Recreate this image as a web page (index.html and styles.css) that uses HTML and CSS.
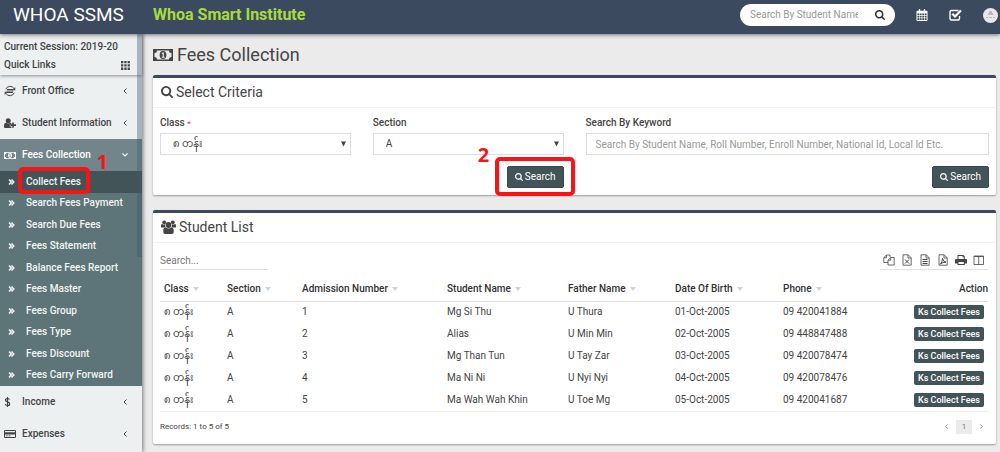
FILE: index.html
```html
<!DOCTYPE html>
<html lang="en">
<head>
<meta charset="utf-8">
<meta name="viewport" content="width=device-width, initial-scale=1">
<title>Fees Collection - Whoa SSMS</title>
<link rel="stylesheet" href="styles.css">
</head>
<body>
<svg class="sprite" aria-hidden="true">
  <symbol id="i-search" viewBox="64 128 1664 1664"><path d="M1216 832q0-185-131.5-316.5t-316.5-131.5-316.5 131.5-131.5 316.5 131.5 316.5 316.5 131.5 316.5-131.5 131.5-316.5zm512 832q0 52-38 90t-90 38q-54 0-90-38l-343-342q-179 124-399 124-143 0-273.5-55.5t-225-150-150-225-55.5-273.5 55.5-273.5 150-225 225-150 273.5-55.5 273.5 55.5 225 150 150 225 55.5 273.5q0 220-124 399l343 343q37 37 37 90z"/></symbol>
  <symbol id="i-money" viewBox="0 0 20 14"><path fill-rule="evenodd" d="M0 1h20v12H0zM4 2.500A2.500 2.500 0 0 1 1.500 5v4A2.500 2.500 0 0 1 4 11.500h12A2.500 2.500 0 0 1 18.500 9V5A2.500 2.500 0 0 1 16 2.500z"/><path fill-rule="evenodd" d="M10 2.900a3.400 4.100 0 0 1 0 8.200a3.400 4.100 0 0 1 0-8.200zM10 4.300L8.500 5.500l.5.700.6-.4v2.900h-.9v1h3v-1h-.9V4.300z"/></symbol>
  <symbol id="i-left" viewBox="0 0 6 8"><path fill="none" stroke="currentColor" d="M4.500 1.500L2 4l2.500 2.500"/></symbol>
  <symbol id="i-right" viewBox="0 0 6 8"><path fill="none" stroke="currentColor" d="M1.500 1.500L4 4 1.500 6.500"/></symbol>
  <symbol id="i-down" viewBox="0 0 8 6"><path fill="none" stroke="currentColor" stroke-width="1.200" d="M1.500 1.500L4 4l2.500-2.500"/></symbol>
  <symbol id="i-dbl" viewBox="0 0 8 8"><path fill="none" stroke="currentColor" stroke-width="1.500" d="M1 1.500L3.300 4 1 6.500M3.500 1.500L5.800 4 3.500 6.500"/></symbol>
  <symbol id="i-caret" viewBox="0 0 6 6"><path d="M0 0h6L3 6z"/></symbol>
  <symbol id="i-sort" viewBox="0 0 6 4"><path d="M0 0h6L3 4z"/></symbol>
  <symbol id="i-grid" viewBox="0 0 9 9"><path d="M0 0h2.300v2.300H0zM3.300 0h2.300v2.300H3.300zM6.600 0h2.300v2.300H6.600zM0 3.300h2.300v2.300H0zM3.300 3.300h2.300v2.300H3.300zM6.600 3.300h2.300v2.300H6.600zM0 6.600h2.300v2.300H0zM3.300 6.600h2.300v2.300H3.300zM6.600 6.600h2.300v2.300H6.600z"/></symbol>
  <symbol id="i-office" viewBox="0 0 12 12"><g fill="none" stroke="currentColor"><path d="M1.800 4.200a4.600 4.600 0 0 1 8.200-.7M10.200 7.800a4.600 4.600 0 0 1-8.200.7"/><path d="M3 4.500h6M2.700 6h6.600M3 7.500h6"/></g><path d="M11.300 2v3.200H8.500zM.7 10V6.800h2.800z"/></symbol>
  <symbol id="i-userplus" viewBox="0 0 12 10"><circle cx="4.200" cy="2.700" r="2.500"/><path d="M0 9V7.500Q0 5 2 4.800q2.200 1.600 4.400 0 .6 0 1 .5v1.200H5.800v2h1.600V10H1Q0 10 0 9zM8.200 4.500h1.600v1.800H12v1.600H9.800v1.800H8.200V7.900H6.400V6.300h1.800z"/></symbol>
  <symbol id="i-dollar" viewBox="0 0 8 12"><path fill="none" stroke="currentColor" stroke-width="1.200" d="M5.500 3.700Q5.200 2.500 3.500 2.500 1.500 2.500 1.500 4 1.500 5.300 3.500 5.900q2.200.600 2.200 2Q5.700 9.500 3.500 9.500 1.500 9.500 1.200 8.200M3.500 1v10"/></symbol>
  <symbol id="i-card" viewBox="0 0 12 10"><path fill-rule="evenodd" d="M1 1h10q1 0 1 1v6q0 1-1 1H1Q0 9 0 8V2q0-1 1-1zm0 1v1.200h10V2zm0 3.500V8h10V5.500zM1.800 6.500h2v.8h-2zM4.600 6.500h2v.8h-2z"/></symbol>
  <symbol id="i-calendar" viewBox="0 0 12 13"><path fill-rule="evenodd" d="M1 2h1.500V.8Q2.500 0 3.300 0t.8.800V2h3.800V.8q0-.8.8-.8t.8.800V2H11q1 0 1 1v9q0 1-1 1H1q-1 0-1-1V3q0-1 1-1zm0 3v1.800h2V5zm2.600 0v1.800h2V5zm2.700 0v1.800h2V5zM9 5v1.800h2V5zM1 7.500v1.800h2V7.500zm2.600 0v1.800h2V7.500zm2.700 0v1.800h2V7.500zM9 7.500v1.800h2V7.500zM1 10v1.800h2V10zm2.600 0v1.800h2V10zm2.700 0v1.800h2V10zM9 10v1.800h2V10z"/></symbol>
  <symbol id="i-check" viewBox="0 0 13 12"><path fill="none" stroke="currentColor" stroke-width="1.400" d="M9.500 1.500H2.500Q1 1.500 1 3v6.500Q1 11 2.500 11H9q1.500 0 1.500-1.500V7"/><path fill="none" stroke="currentColor" stroke-width="2.200" d="M3.300 4.800L6 7.500l6-6"/></symbol>
  <symbol id="i-users" viewBox="0 0 15 14"><circle cx="3.200" cy="2.300" r="1.900"/><circle cx="11.800" cy="2.300" r="1.900"/><path d="M0 7V5.500Q0 3.800 1 3.900q2 1.200 3 .4-.3 2 .7 3.300H1Q0 7.600 0 7zM15 7V5.500q0-1.700-1-1.600-2 1.200-3 .4.300 2-.7 3.300H14q1 0 1-.6z"/><circle cx="7.500" cy="5" r="2.900"/><path d="M2.300 12V10.500Q2.300 7.500 4.600 7.400q2.900 2.200 5.800 0 2.300.1 2.300 3.100V12q0 2-1.700 2H4q-1.700 0-1.700-2z"/></symbol>
  <symbol id="i-copy" viewBox="0 0 12 12"><path fill="none" stroke="currentColor" stroke-width=".8" d="M7 3V1H3.500L.8 3.700V8.500H5M3.500 1v2.700H.8M11.200 3.500H7.700L5 6.200V11h6.200zM7.700 3.500v2.700H5"/></symbol>
  <symbol id="i-file" viewBox="0 0 10 12"><path fill="none" stroke="currentColor" stroke-width=".8" d="M1 .8h5.200l3 3v7.400H1zM6 .8V4h3.200"/></symbol>
  <symbol id="i-print" viewBox="0 0 12 12"><path fill-rule="evenodd" d="M2.500 1h5.800L9.800 2.500V5H11q1 0 1 1v3.500H9.800V11H2.500V9.500H0V6q0-1 1-1h1.500zm1 1v3h5.300V3.200H7.600V2zm0 6v2h5.300V8z"/></symbol>
  <symbol id="i-columns" viewBox="0 0 12 12"><path fill="none" stroke="currentColor" stroke-width=".8" d="M1 2h9.500v8.500H1zM5.700 2v8.500M1 2.500h9.500"/></symbol>
</svg>

<header class="topbar">
  <a class="brand" href="#">WHOA SSMS</a>
  <span class="institute">Whoa Smart Institute</span>
  <form class="quick-search">
    <input type="text" aria-label="Search students" placeholder="Search By Student Name">
    <button type="button" aria-label="Search"><svg width="10" height="10"><use href="#i-search"/></svg></button>
  </form>
  <nav class="tools">
    <a href="#" aria-label="Calendar"><svg width="12" height="12"><use href="#i-calendar"/></svg></a>
    <a href="#" aria-label="Tasks"><svg width="13" height="12"><use href="#i-check"/></svg></a>
    <a href="#" aria-label="Profile"><svg width="15" height="15" viewBox="0 0 15 15"><circle cx="7.500" cy="7.500" r="7.500" fill="#e9e9e9"/><path fill="#bbb" d="M4.500 7q0-2 1.500-2V3.500L7.500 2.500 9 3.500V5q1.500 0 1.500 2zM3 9h2v1H3zm3 0h3v1H6zm4 0h2v1h-2z"/></svg></a>
  </nav>
</header>

<div class="layout">
  <aside class="sidebar">
    <div class="session">
      <div>Current Session: 2019-20</div>
      <a href="#">Quick Links <svg width="9" height="9"><use href="#i-grid"/></svg></a>
    </div>
    <nav class="menu">
      <a class="item" href="#"><svg width="12" height="12"><use href="#i-office"/></svg><span>Front Office</span><svg class="arrow" width="6" height="8"><use href="#i-left"/></svg></a>
      <a class="item" href="#"><svg width="12" height="10"><use href="#i-userplus"/></svg><span>Student Information</span><svg class="arrow" width="6" height="8"><use href="#i-left"/></svg></a>
      <a class="item open" href="#"><svg width="12" height="9"><use href="#i-money"/></svg><span>Fees Collection</span><svg class="arrow" width="8" height="6"><use href="#i-down"/></svg></a>
      <div class="submenu">
        <a class="current" href="#"><svg width="8" height="8"><use href="#i-dbl"/></svg><span>Collect Fees</span></a>
        <a href="#"><svg width="8" height="8"><use href="#i-dbl"/></svg><span>Search Fees Payment</span></a>
        <a href="#"><svg width="8" height="8"><use href="#i-dbl"/></svg><span>Search Due Fees</span></a>
        <a href="#"><svg width="8" height="8"><use href="#i-dbl"/></svg><span>Fees Statement</span></a>
        <a href="#"><svg width="8" height="8"><use href="#i-dbl"/></svg><span>Balance Fees Report</span></a>
        <a href="#"><svg width="8" height="8"><use href="#i-dbl"/></svg><span>Fees Master</span></a>
        <a href="#"><svg width="8" height="8"><use href="#i-dbl"/></svg><span>Fees Group</span></a>
        <a href="#"><svg width="8" height="8"><use href="#i-dbl"/></svg><span>Fees Type</span></a>
        <a href="#"><svg width="8" height="8"><use href="#i-dbl"/></svg><span>Fees Discount</span></a>
        <a href="#"><svg width="8" height="8"><use href="#i-dbl"/></svg><span>Fees Carry Forward</span></a>
        <div class="mark mark-one"><span>1</span></div>
      </div>
      <a class="item" href="#"><svg width="8" height="12"><use href="#i-dollar"/></svg><span>Income</span><svg class="arrow" width="6" height="8"><use href="#i-left"/></svg></a>
      <a class="item" href="#"><svg width="12" height="10"><use href="#i-card"/></svg><span>Expenses</span><svg class="arrow" width="6" height="8"><use href="#i-left"/></svg></a>
    </nav>
    <div class="scroll-thumb"></div>
  </aside>

  <main class="content">
    <h1><svg width="20" height="14"><use href="#i-money"/></svg>Fees Collection</h1>

    <section class="panel">
      <h2><svg width="12" height="12"><use href="#i-search"/></svg>Select Criteria</h2>
      <form class="criteria">
        <div class="field">
          <label for="class">Class <b class="req">*</b></label>
          <div class="select"><select id="class"><option>၈ တန်း</option></select><svg width="5" height="6"><use href="#i-caret"/></svg></div>
        </div>
        <div class="field">
          <label for="section">Section</label>
          <div class="select"><select id="section"><option>A</option></select><svg width="5" height="6"><use href="#i-caret"/></svg></div>
        </div>
        <div class="field wide">
          <label for="keyword">Search By Keyword</label>
          <input id="keyword" type="text" placeholder="Search By Student Name, Roll Number, Enroll Number, National Id, Local Id Etc.">
        </div>
        <div class="submit wide">
          <div class="marked"><button class="btn" type="button"><svg width="8" height="8"><use href="#i-search"/></svg>Search</button><div class="mark mark-two"><span>2</span></div></div>
        </div>
        <div class="submit wide">
          <button class="btn" type="button"><svg width="8" height="8"><use href="#i-search"/></svg>Search</button>
        </div>
      </form>
    </section>

    <section class="panel">
      <h2><svg width="15" height="14"><use href="#i-users"/></svg>Student List</h2>
      <div class="list">
        <div class="list-bar">
          <input type="text" aria-label="Search list" placeholder="Search...">
          <div class="export">
            <button type="button" aria-label="Copy"><svg width="12" height="12"><use href="#i-copy"/></svg></button>
            <button type="button" aria-label="Excel"><svg width="10" height="12"><use href="#i-file"/><path class="line" d="M3 5.500l4 4M7 5.500l-4 4"/></svg></button>
            <button type="button" aria-label="CSV"><svg width="10" height="12"><use href="#i-file"/><path class="line" d="M2.500 5.500h5M2.500 7.500h5M2.500 9.500h5"/></svg></button>
            <button type="button" aria-label="PDF"><svg width="10" height="12"><use href="#i-file"/><path class="line" d="M2.500 10Q4.500 7.500 4.500 4.500 5 7.500 8 8.200 5 7.800 2.500 10"/></svg></button>
            <button type="button" aria-label="Print"><svg width="12" height="12"><use href="#i-print"/></svg></button>
            <button type="button" aria-label="Columns"><svg width="12" height="12"><use href="#i-columns"/></svg></button>
          </div>
        </div>
        <table>
          <colgroup><col class="c-class"><col class="c-section"><col class="c-admission"><col class="c-name"><col class="c-father"><col class="c-birth"><col class="c-phone"><col></colgroup>
          <thead>
            <tr><th>Class<svg width="6" height="4"><use href="#i-sort"/></svg></th><th>Section<svg width="6" height="4"><use href="#i-sort"/></svg></th><th>Admission Number<svg width="6" height="4"><use href="#i-sort"/></svg></th><th>Student Name<svg width="6" height="4"><use href="#i-sort"/></svg></th><th>Father Name<svg width="6" height="4"><use href="#i-sort"/></svg></th><th>Date Of Birth<svg width="6" height="4"><use href="#i-sort"/></svg></th><th>Phone<svg width="6" height="4"><use href="#i-sort"/></svg></th><th class="action">Action</th></tr>
          </thead>
          <tbody>
            <tr><td>၈ တန်း</td><td>A</td><td>1</td><td>Mg Si Thu</td><td>U Thura</td><td>01-Oct-2005</td><td>09 420041884</td><td class="collect"><a href="#">Ks Collect Fees</a></td></tr>
            <tr><td>၈ တန်း</td><td>A</td><td>2</td><td>Alias</td><td>U Min Min</td><td>02-Oct-2005</td><td>09 448847488</td><td class="collect"><a href="#">Ks Collect Fees</a></td></tr>
            <tr><td>၈ တန်း</td><td>A</td><td>3</td><td>Mg Than Tun</td><td>U Tay Zar</td><td>03-Oct-2005</td><td>09 420078474</td><td class="collect"><a href="#">Ks Collect Fees</a></td></tr>
            <tr><td>၈ တန်း</td><td>A</td><td>4</td><td>Ma Ni Ni</td><td>U Nyi Nyi</td><td>04-Oct-2005</td><td>09 420078476</td><td class="collect"><a href="#">Ks Collect Fees</a></td></tr>
            <tr><td>၈ တန်း</td><td>A</td><td>5</td><td>Ma Wah Wah Khin</td><td>U Toe Mg</td><td>05-Oct-2005</td><td>09 420041687</td><td class="collect"><a href="#">Ks Collect Fees</a></td></tr>
          </tbody>
        </table>
        <div class="list-foot">
          <span>Records: 1 to 5 of 5</span>
          <nav class="pages">
            <a href="#" aria-label="Previous"><svg width="5" height="7"><use href="#i-left"/></svg></a>
            <a class="page" href="#">1</a>
            <a href="#" aria-label="Next"><svg width="5" height="7"><use href="#i-right"/></svg></a>
          </nav>
        </div>
      </div>
    </section>
  </main>
</div>
</body>
</html>
```
FILE: styles.css
```css
* { box-sizing: border-box; }
body {
  margin: 0;
  min-height: 100vh;
  display: flex;
  flex-direction: column;
  background: #ebebeb;
  color: #444;
  font: 10px/16px Roboto, "Noto Sans", "Noto Sans Myanmar", sans-serif;
}
a { color: inherit; text-decoration: none; }
button, input, select { font: inherit; color: inherit; }
button { cursor: pointer; }
svg { display: block; flex: none; fill: currentColor; }
.sprite { position: absolute; width: 0; height: 0; }
::placeholder { color: #999; opacity: 1; }

.topbar {
  position: relative;
  z-index: 3;
  display: flex;
  align-items: center;
  height: 34px;
  padding: 0 2px 4px 13px;
  background: #3c4a5f;
  color: #fff;
  box-shadow: 0 1px 4px rgba(0, 0, 0, .5);
}
.brand { width: 140px; font-size: 19px; line-height: 28px; }
.institute { color: #a7dc3c; font-size: 16px; font-weight: 700; }
.quick-search {
  display: flex;
  align-items: center;
  width: 155px;
  height: 22px;
  margin-left: auto;
  padding: 0 10px;
  border-radius: 11px;
  background: #fff;
  color: #333;
}
.quick-search input {
  flex: 1;
  min-width: 0;
  margin-right: 17px;
  padding: 0;
  border: 0;
  background: none;
  outline: 0;
}
.quick-search button { padding: 0; border: 0; background: none; }
.tools { display: flex; align-items: center; gap: 21px; margin-left: 21px; }

.layout { flex: 1; display: flex; }
.sidebar {
  position: relative;
  z-index: 2;
  flex: none;
  width: 142px;
  background: #ecf0f1;
  font-weight: 500;
  box-shadow: 1px 0 4px rgba(0, 0, 0, .5);
}
.session {
  height: 41px;
  padding: 4px 12px 0 4px;
  line-height: 18px;
  box-shadow: 0 1px 3px rgba(0, 0, 0, .4);
}
.session a { display: flex; align-items: center; justify-content: space-between; }
.item {
  display: grid;
  grid-template-columns: 18px 1fr 8px;
  align-items: center;
  height: 32px;
  padding: 0 13px 0 4px;
}
.item .arrow { justify-self: center; }
.item.open { background: #72858a; color: #fff; }
.submenu {
  position: relative;
  display: grid;
  grid-auto-rows: 1fr;
  height: 215px;
  background: #5d7478;
  color: #f2f5f5;
}
.submenu a {
  display: grid;
  grid-template-columns: 18px 1fr;
  align-items: center;
  padding-left: 8px;
}
.submenu a.current { background: #435458; }
.scroll-thumb {
  position: absolute;
  top: 0;
  right: 0;
  width: 5px;
  height: 223px;
  background: rgba(66, 90, 115, .4);
}

.mark {
  position: absolute;
  z-index: 4;
  border: 4px solid #f81414;
  border-radius: 5px;
  color: #f81414;
  font: 700 20px/20px "Open Sans", sans-serif;
  pointer-events: none;
}
.mark span { position: absolute; }
.mark-one { top: -4px; left: 18px; width: 72px; height: 27px; }
.mark-one span { top: -19px; right: -22px; }
.marked { position: relative; }
.mark-two { inset: -9px -11px -8px -12px; }
.mark-two span { top: -16px; left: -21px; }

.content { flex: 1; min-width: 0; padding: 9px 4px 8px 11px; }
h1, h2 { display: flex; align-items: center; margin: 0; font-weight: 400; }
h1 { gap: 4px; margin-bottom: 8px; font-size: 18px; line-height: 24px; }
h2 {
  gap: 3px;
  height: 30px;
  padding: 0 7px 2px 8px;
  border-bottom: 1px solid #f2f2f2;
  font-size: 14px;
}
.panel {
  margin-bottom: 15px;
  border-top: 3px solid #3c4a5f;
  border-radius: 2px;
  background: #fff;
  box-shadow: 0 1px 2px rgba(0, 0, 0, .35);
}
.panel:last-child { margin-bottom: 0; }
.criteria {
  display: grid;
  grid-template-columns: repeat(4, 1fr);
  gap: 11px 22px;
  padding: 7px;
}
.wide { grid-column: span 2; }
.field label { display: block; margin-bottom: 2px; font-weight: 500; }
.req { color: #f44; font-size: 8px; line-height: 8px; }
.field input, .field select {
  display: block;
  width: 100%;
  height: 22px;
  padding: 0 9px;
  border: 1px solid #dcdce6;
  border-radius: 0;
  background: #fff;
  outline: 0;
}
.field select { padding: 0 12px; appearance: none; }
.select { position: relative; }
.select svg { position: absolute; top: 8px; right: 5px; }
.submit { display: flex; justify-content: flex-end; }
.btn {
  display: flex;
  align-items: center;
  gap: 2px;
  height: 22px;
  padding: 0 7px;
  border: 1px solid #37474b;
  border-radius: 2px;
  background: #435458;
  color: #fff;
}

.list { padding: 8px 8px 10px 7px; }
.list-bar { display: flex; justify-content: space-between; align-items: stretch; height: 19px; }
.list-bar input {
  width: 108px;
  padding: 2px 0 0;
  border: 0;
  border-bottom: 1px solid #ddd;
  background: none;
  outline: 0;
}
.list-bar ::placeholder { color: #777; }
.export { display: flex; gap: 6px; padding: 0 3px; border-bottom: 1px solid #e2e2e2; }
.export button {
  display: flex;
  justify-content: center;
  align-items: center;
  width: 12px;
  padding: 0;
  border: 0;
  background: none;
}
.line { fill: none; stroke: currentColor; stroke-width: 1; }
table { width: 100%; margin-top: 7px; border-collapse: collapse; table-layout: fixed; }
th, td { height: 22px; padding: 0 4px; text-align: left; white-space: nowrap; }
th { height: 24px; font-weight: 500; color: #333; }
th svg { display: inline-block; margin-left: 4px; vertical-align: 1px; fill: #d3d3d3; }
thead tr { border-bottom: 1px solid #ddd; }
tbody { border-bottom: 1px solid #eee; }
.c-class { width: 63px; }
.c-section { width: 75px; }
.c-admission { width: 145px; }
.c-name { width: 121px; }
.c-father { width: 107px; }
.c-birth { width: 108px; }
.c-phone { width: 100px; }
th.action { padding-right: 0; text-align: right; }
td.collect { text-align: right; }
.collect a {
  display: inline-block;
  padding: 0 4px;
  border-radius: 2px;
  background: #435458;
  color: #fff;
  font-size: 9px;
  font-weight: 500;
  line-height: 14px;
}
.list-foot { display: flex; align-items: center; justify-content: space-between; padding-top: 8px; font-size: 8px; line-height: 14px; }
.pages { display: flex; align-items: center; gap: 7px; padding-right: 4px; color: #777; }
.page { width: 16px; background: #ebebeb; text-align: center; }
```
